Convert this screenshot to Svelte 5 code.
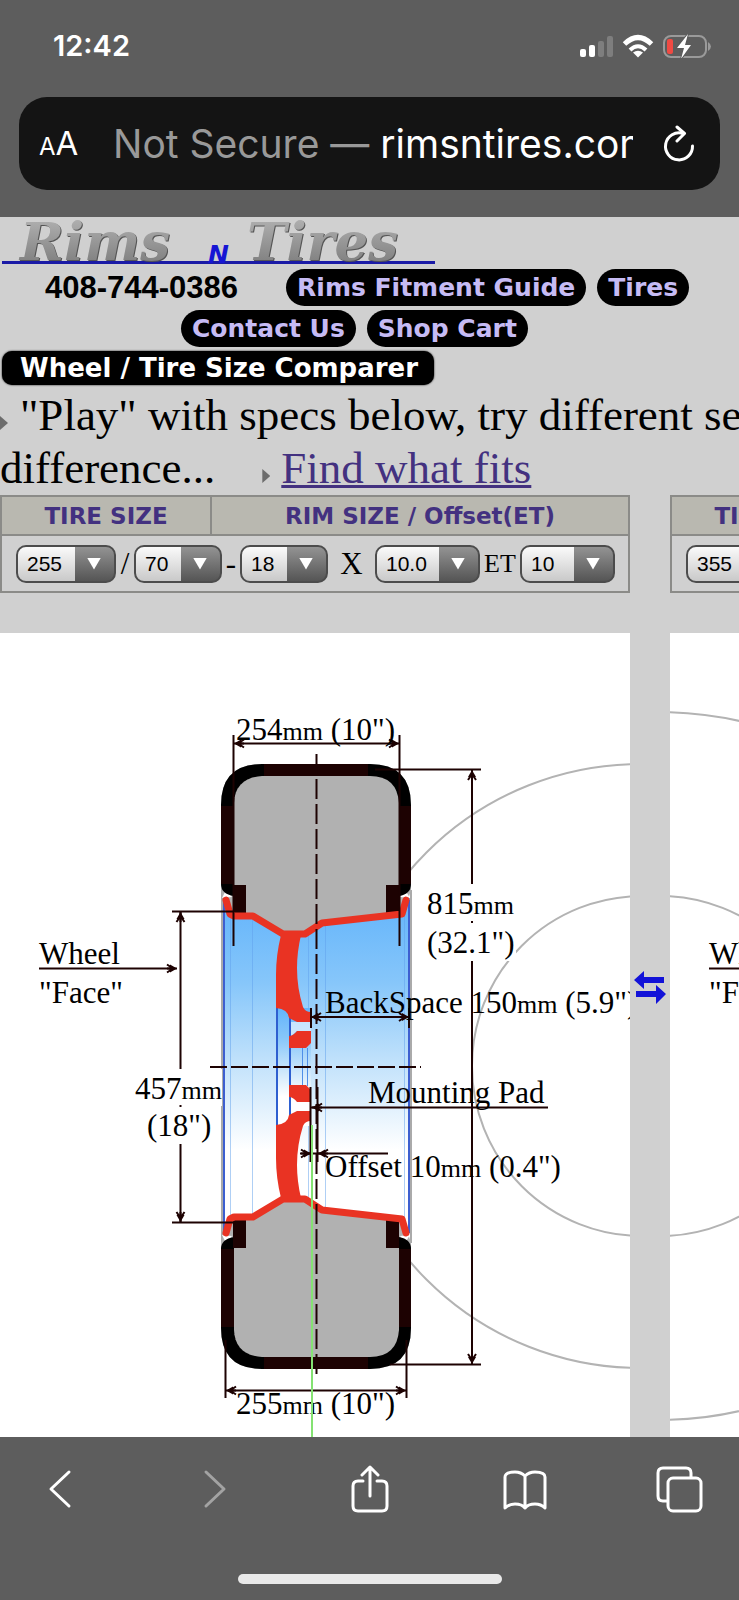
<script lang="ts">
    type Spec = { id: string; value: string; options: string[]; before: string };

    const specs: Spec[] = [
        { id: 'width', value: '255', options: ['245', '255', '265', '355'], before: '' },
        { id: 'aspect', value: '70', options: ['65', '70', '75'], before: '/' },
        { id: 'rim', value: '18', options: ['17', '18', '19'], before: '-' },
        { id: 'rim-width', value: '10.0', options: ['10.0', '10.5'], before: 'X' },
        { id: 'offset', value: '10', options: ['-10', '0', '10'], before: 'ET' }
    ];

    const labels: Record<string, string> = {
        width: 'Tire width',
        aspect: 'Aspect ratio',
        rim: 'Rim diameter',
        'rim-width': 'Rim width',
        offset: 'Offset'
    };

    // Each setup keeps its own values, the second one starts wider
    let setups = $state([
        specs.map((s) => s.value),
        specs.map((s) => (s.id === 'width' ? '355' : s.value))
    ]);

    function swapSetups() {
        setups = [setups[1], setups[0]];
    }
</script>

{#snippet sizeTable(n: number)}
    <table class="sizes">
        <thead>
            <tr>
                <th class="tire-col">TIRE SIZE</th>
                <th>RIM SIZE / Offset(ET)</th>
            </tr>
        </thead>
        <tbody>
            <tr>
                <td colspan="2">
                    <div class="specs">
                        {#each specs as spec, i}
                            {#if spec.before}
                                <span class="sep sep-{spec.id}">{spec.before}</span>
                            {/if}
                            <span class="picker">
                                <select id="{spec.id}-{n}" aria-label={labels[spec.id]} bind:value={setups[n][i]}>
                                    {#each spec.options as option}
                                        <option value={option}>{option}</option>
                                    {/each}
                                </select>
                            </span>
                        {/each}
                    </div>
                </td>
            </tr>
        </tbody>
    </table>
{/snippet}

{#snippet wheelFace()}
    <text x="39" y="964">Wheel</text>
    <text x="39" y="1003">"Face"</text>
    <path class="line" d="M39 968.5H170" />
    <use href="#head" transform="translate(177 968.5)" />
{/snippet}

<!-- upper half of the section, mirrored for the lower half -->
{#snippet half()}
    <path d="M221 890V805Q221 764 262 764H370Q411 764 411 805V890L405 910L402 916L323 924L305 936H283L253 918H233L226 905Z" fill="#b1b1b1" />
    <path d="M222 898L226 890L232 897M410 898L405 890L400 897" fill="#fff" />
    <path d="M221 805Q221 764 262 764H370Q411 764 411 805V884Q411 894 399 896V803Q397 776 370 776H262Q235 778 234 803V896Q221 894 221 884Z
        M234 803V885H399V803Q397 776 370 776H262Q235 778 234 803Z" fill="#000" fill-rule="evenodd" />
    <path d="M234 803V897H399V803Q397 776 370 776H262Q235 778 234 803Z" fill="#b1b1b1" />
    <path d="M221 806H234V884H221ZM399 806H411V884H399ZM264 764H368V776H264ZM233 885H246V914H233ZM386 885H399V914H386Z" fill="#1d0202" />
    <path d="M226 900L230 914L234 916H253L283 934H305L322 923L402 914L406 900" fill="none" stroke="#e93323" stroke-width="7" stroke-linecap="round" stroke-linejoin="round" />
    <path d="M281 935H301Q297 952 297 968Q297 988 303 1007Q305 1012 311 1012V1022H297L289 1018Q288 1009 276 1008V975Q276 955 281 935Z" fill="#e93323" />
    <path d="M289 1036Q293 1036 297 1031H311V1043L306 1048H289Z" fill="#e93323" />
{/snippet}

<div class="phone">
    <header class="chrome">
        <div class="status">
            <span class="time">12:42</span>
            <svg width="134" height="24" viewBox="579 33 134 24" aria-hidden="true">
                <rect x="580" y="48" width="6" height="8" rx="2" fill="#fff" />
                <rect x="589" y="44" width="6" height="12" rx="2" fill="#fff" />
                <rect x="598" y="40" width="6" height="16" rx="2" fill="#7e7e7e" />
                <rect x="607" y="35" width="6" height="21" rx="2" fill="#7e7e7e" />
                <g fill="none" stroke="#fff" stroke-width="5">
                    <path d="M624.5 43Q638 30 651.500 43" />
                    <path d="M630 49Q638 41.500 646 49" stroke-width="4" />
                </g>
                <path d="M633 51.500Q638 48 643 51.500L638 56.500Z" fill="#fff" />
                <rect x="664" y="35" width="42" height="21" rx="7" fill="none" stroke="#9a9a9a" stroke-width="2" />
                <path d="M708 41Q711 43 711 45.500Q711 48 708 50Z" fill="#9a9a9a" />
                <rect x="667" y="38" width="6" height="15" rx="2" fill="#f04a43" />
                <path d="M688 33L677 47H684L681 58L691 44H685Z" fill="#fff" stroke="#5c5c5c" stroke-width="2" paint-order="stroke" />
            </svg>
        </div>
        <div class="address">
            <button class="text-size" aria-label="Text size"><small>A</small>A</button>
            <div class="url"><span>Not Secure —</span> rimsntires.com</div>
            <button class="reload" aria-label="Reload">
                <svg width="32" height="38" viewBox="0 0 32 38" fill="none" stroke="#fff" stroke-width="3" stroke-linecap="round" stroke-linejoin="round">
                    <path d="M20 8.500A13.500 13.500 0 1 0 29.500 21" />
                    <path d="M14 2L21.500 8.500L14 16" />
                </svg>
            </button>
        </div>
    </header>

    <main>
        <div class="brand">
            <svg width="440" height="47" viewBox="0 0 440 47" role="img" aria-label="Rims N Tires">
                <defs>
                    <linearGradient id="metal" x1="0" y1="0" x2="0" y2="1">
                        <stop offset="0" stop-color="#b9b9b9" />
                        <stop offset="1" stop-color="#777" />
                    </linearGradient>
                </defs>
                <path d="M2 45.500H435" stroke="#1a1aa6" stroke-width="3" />
                <text class="logo shade" x="21" y="44">Rims</text>
                <text class="logo" x="20" y="43">Rims</text>
                <text class="logo shade" x="248" y="44">Tires</text>
                <text class="logo" x="247" y="43">Tires</text>
                <text class="logo-n" x="208" y="46">N</text>
            </svg>
        </div>

        <nav>
            <div class="nav-row first">
                <strong class="tel">408-744-0386</strong>
                <a class="pill" href="#guide">Rims Fitment Guide</a>
                <a class="pill" href="#tires">Tires</a>
            </div>
            <div class="nav-row second">
                <a class="pill" href="#contact">Contact Us</a>
                <a class="pill" href="#cart">Shop Cart</a>
            </div>
        </nav>

        <h1>Wheel / Tire Size Comparer</h1>

        <p class="intro">
            <i class="tri"></i><span class="play">"Play" with specs below, try different setups to see the</span><br />
            difference...<i class="tri inner"></i><a href="#fits">Find what fits</a>
        </p>

        <div class="pair tables">
            {@render sizeTable(0)}
            {@render sizeTable(1)}
        </div>

        <div class="pair drawings">
            <svg class="drawing" viewBox="0 633 630 804" width="630" height="804">
                <defs>
                    <linearGradient id="rimBlue" x1="0" y1="0" x2="0" y2="1">
                        <stop offset="0" stop-color="#63b4fb" />
                        <stop offset="0.25" stop-color="#86c6fa" />
                        <stop offset="0.5" stop-color="#c4e3fb" />
                        <stop offset="0.75" stop-color="#fff" />
                    </linearGradient>
                    <g id="head">
                        <path d="M0 0L-7 -4V4Z" fill="#1d0202" />
                        <path d="M-4 0L-10 -4M-4 0L-10 4M-10 0H0" fill="none" stroke="#1d0202" stroke-width="2" />
                    </g>
                </defs>

                <g fill="none" stroke="#b3b3b3" stroke-width="2">
                    <circle cx="640" cy="1066" r="302" />
                    <circle cx="642" cy="1066" r="170" />
                </g>
                <rect x="425" y="884" width="91" height="77" fill="#fff" />

                <rect x="221" y="898" width="190" height="336" fill="url(#rimBlue)" />
                <g stroke="#5f9fec" stroke-opacity="0.5" fill="none" stroke-width="1">
                    <path d="M230.500 915V1220M252.500 915V1220M308.500 935V1200M325.500 925V1210M404.500 912V1220" />
                </g>
                <rect x="277" y="1008" width="34" height="118" fill="url(#rimBlue)" />
                <path d="M291 1022H311V1031H297L291 1036ZM291 1102H297L311 1111H291Z" fill="#fff" fill-opacity="0.6" />
                <path d="M277 1008V1126M290 1018V1116" stroke="#2e5fd0" stroke-width="2" />
                <path d="M302.500 1048V1086M307.500 1048V1086" stroke="#4f8fe8" />
                <path d="M222 890V1243M411 890V1243" stroke="#aaa" stroke-width="2" />
                <path d="M224 900V1233M409 900V1233" stroke="#3d5fd0" stroke-width="2" />

                {@render half()}
                <g transform="translate(0 2133) scale(1 -1)">{@render half()}</g>

                <rect x="134" y="1069" width="88" height="37" fill="#fff" />

                <g class="line">
                    <path d="M233.500 735V946M399.500 735V946M236 743.500H397" />
                    <path d="M172 911.500H233M172 1222.500H236M180.500 912V1069M180.500 1144V1222M180.500 1105V1107" />
                    <path d="M375 769.500H481M390 1364.500H481M472 770V884M472 961V1364M472 921V923" />
                    <path d="M311 1008V1028M409 1008V1028M313 1017H407" />
                    <path d="M311 1107.500H548M310.500 1087V1162M317.500 1087V1162M300 1153.500H388" />
                    <path d="M225.500 1340V1398M406.500 1340V1398M228 1390.500H404" />
                    <path d="M316.500 754V1378" stroke-dasharray="20 5" />
                    <path d="M210 1067H421" stroke-dasharray="17 4" />
                </g>
                <use href="#head" transform="translate(234 743.5) rotate(180)" />
                <use href="#head" transform="translate(399 743.5)" />
                <use href="#head" transform="translate(180.5 912) rotate(-90)" />
                <use href="#head" transform="translate(180.5 1222) rotate(90)" />
                <use href="#head" transform="translate(472 770) rotate(-90)" />
                <use href="#head" transform="translate(472 1364) rotate(90)" />
                <use href="#head" transform="translate(311 1017) rotate(180)" />
                <use href="#head" transform="translate(409 1017)" />
                <use href="#head" transform="translate(312 1107.5) rotate(180)" />
                <use href="#head" transform="translate(311 1153.5)" />
                <use href="#head" transform="translate(318 1153.5) rotate(180)" />
                <use href="#head" transform="translate(226 1390.5) rotate(180)" />
                <use href="#head" transform="translate(406 1390.5)" />

                {@render wheelFace()}
                <text x="236" y="740">254<tspan class="mm">mm</tspan> (10")</text>
                <text x="236" y="1414">255<tspan class="mm">mm</tspan> (10")</text>
                <text x="427" y="914">815<tspan class="mm">mm</tspan></text>
                <text x="427" y="953">(32.1")</text>
                <text x="135" y="1099">457<tspan class="mm">mm</tspan></text>
                <text x="147" y="1136">(18")</text>
                <text x="325" y="1013">BackSpace 150<tspan class="mm">mm</tspan> (5.9")</text>
                <text x="368" y="1103">Mounting Pad</text>
                <text x="325" y="1177">Offset 10<tspan class="mm">mm</tspan> (0.4")</text>

                <path d="M312 1125V1437" stroke="#84e272" stroke-width="2" />
            </svg>

            <div class="between">
                <button class="swap" aria-label="Swap setups" onclick={swapSetups}>
                    <svg width="32" height="33" viewBox="0 0 32 33" fill="#1212d8">
                        <path d="M0 9L10 0V6H30V12H10V18Z" />
                        <path d="M32 23L22 14V20H2V26H22V33Z" />
                    </svg>
                </button>
            </div>

            <svg class="drawing" viewBox="0 633 630 804" width="630" height="804">
                <g fill="none" stroke="#b3b3b3" stroke-width="2">
                    <circle cx="-10" cy="1066" r="354" />
                    <circle cx="-10" cy="1066" r="170" />
                </g>
                {@render wheelFace()}
            </svg>
        </div>
    </main>

    <footer class="chrome">
        <div class="toolbar">
            <button aria-label="Back">
                <svg width="50" height="50" viewBox="0 0 50 50"><path d="M34 7L16 24L34 41" /></svg>
            </button>
            <button aria-label="Forward" class="dim">
                <svg width="50" height="50" viewBox="0 0 50 50"><path d="M16 7L34 24L16 41" /></svg>
            </button>
            <button aria-label="Share">
                <svg width="50" height="50" viewBox="0 0 50 50">
                    <path d="M18 16H13Q8 16 8 21V41Q8 46 13 46H37Q42 46 42 41V21Q42 16 37 16H32" />
                    <path d="M25 31V2M17 10L25 2L33 10" />
                </svg>
            </button>
            <button aria-label="Bookmarks">
                <svg width="50" height="50" viewBox="0 0 50 50">
                    <path d="M25 11Q21 7 15 7Q5 7 5 12V43Q9 39 15 39Q22 39 25 43Q28 39 35 39Q41 39 45 43V12Q45 7 35 7Q29 7 25 11V43" />
                </svg>
            </button>
            <button aria-label="Tabs">
                <svg width="50" height="50" viewBox="0 0 50 50">
                    <path d="M36 12V8Q36 3 31 3H8Q3 3 3 8V31Q3 36 8 36H12" />
                    <rect x="13" y="13" width="33" height="33" rx="5" />
                </svg>
            </button>
        </div>
        <div class="home"></div>
    </footer>
</div>

<style>
    :global(body) {
        margin: 0;
        background: #5c5c5c;
    }

    .phone {
        display: flex;
        flex-direction: column;
        overflow: hidden;
        font-family: Inter, Roboto, sans-serif;
    }

    button {
        padding: 0;
        border: 0;
        background: none;
        color: #fff;
        font: inherit;
        cursor: pointer;
    }

    svg {
        display: block;
    }

    .chrome {
        background: #5d5d5d;
        color: #fff;
    }

    /* status bar and address field */
    .status {
        display: flex;
        justify-content: space-between;
        align-items: center;
        height: 91px;
        padding: 0 26px 0 53px;
    }

    .time {
        font-size: 29px;
        font-weight: 600;
    }

    .address {
        display: flex;
        align-items: center;
        height: 93px;
        margin: 6px 19px 27px;
        padding: 0 25px 0 20px;
        border-radius: 28px;
        background: #141414;
    }

    .text-size {
        flex: none;
        width: 74px;
        padding-top: 3px;
        text-align: left;
        font-size: 33px;
        line-height: 40px;
    }

    .text-size small {
        font-size: 24px;
    }

    .url {
        flex: 1;
        overflow: hidden;
        white-space: nowrap;
        font-size: 39px;
        line-height: 60px;
    }

    .url span {
        color: #999;
    }

    .reload {
        margin-left: 30px;
    }

    /* web page */
    main {
        overflow: hidden;
        background: #d0d0d0;
        color: #000;
        font-family: "Liberation Serif", serif;
    }

    .brand {
        height: 48px;
    }

    .brand svg {
        overflow: visible;
    }

    .logo {
        font-family: "DejaVu Serif", serif;
        font-size: 53px;
        font-style: italic;
        font-weight: bold;
        fill: url(#metal);
    }

    .logo.shade {
        fill: #555;
    }

    .logo-n {
        font-family: "DejaVu Sans", sans-serif;
        font-size: 25px;
        font-style: italic;
        font-weight: bold;
        fill: #1616d4;
    }

    .nav-row {
        display: flex;
        gap: 11px;
        padding-top: 4px;
    }

    .first {
        padding-left: 45px;
    }

    .second {
        padding-left: 181px;
    }

    .tel {
        margin-right: 37px;
        font-family: "Liberation Sans", sans-serif;
        font-size: 31px;
        line-height: 37px;
    }

    .pill,
    h1 {
        border-radius: 19px;
        background: #000;
        font-family: "DejaVu Sans", sans-serif;
        font-weight: bold;
        white-space: nowrap;
    }

    .pill {
        padding: 0 11px;
        color: #c6bbf4;
        font-size: 25px;
        line-height: 37px;
        text-decoration: none;
    }

    h1 {
        width: max-content;
        margin: 4px 2px;
        padding: 0 16px 0 18px;
        border-radius: 10px;
        box-shadow: 0 0 2px #000;
        color: #fff;
        font-size: 26px;
        line-height: 34px;
    }

    .intro {
        margin: 0;
        font-size: 45px;
        line-height: 53px;
        white-space: nowrap;
    }

    .intro a {
        color: #433180;
        text-decoration-thickness: 3px;
    }

    .tri {
        display: inline-block;
        width: 8px;
        height: 14px;
        background: #6c6c6c;
        clip-path: polygon(0 0, 100% 50%, 0 100%);
    }

    .play {
        margin-left: 12px;
    }

    .inner {
        margin: 0 11px 0 47px;
    }

    .pair {
        display: flex;
        width: max-content;
    }

    .tables {
        gap: 40px;
        padding-bottom: 40px;
    }

    .sizes {
        width: 630px;
        border-collapse: collapse;
    }

    th,
    td {
        padding: 0;
        border: 2px solid #8b8b88;
    }

    th {
        height: 37px;
        background: #b9b8b0;
        color: #433180;
        font-family: "DejaVu Sans", sans-serif;
        font-size: 23px;
        line-height: 26px;
    }

    .tire-col {
        width: 208px;
    }

    .specs {
        display: flex;
        align-items: center;
        height: 55px;
        padding-left: 14px;
        font-size: 31px;
    }

    .sep {
        width: 18px;
        line-height: 38px;
        text-align: center;
    }

    .sep-rim-width {
        width: 47px;
    }

    .sep-offset {
        width: 40px;
        font-size: 26px;
    }

    .picker {
        position: relative;
    }

    .picker::after {
        content: "";
        position: absolute;
        top: 13px;
        right: 15px;
        width: 14px;
        height: 12px;
        background: #fff;
        clip-path: polygon(0 0, 100% 0, 50% 100%);
        pointer-events: none;
    }

    select {
        display: block;
        height: 38px;
        padding: 0 51px 0 9px;
        appearance: none;
        border: 2px solid #4c4c4c;
        border-radius: 10px;
        background:
            linear-gradient(#939393, #555) right / 39px 100% no-repeat,
            linear-gradient(#fafafa, #c9c9c9);
        color: #000;
        font-family: "Liberation Sans", sans-serif;
        font-size: 21px;
    }

    .drawing {
        flex: none;
        background: #fff;
        font-size: 31px;
    }

    .mm {
        font-size: 26px;
    }

    .line {
        fill: none;
        stroke: #1d0202;
        stroke-width: 2;
    }

    .between {
        width: 40px;
        padding-top: 338px;
        box-sizing: border-box;
    }

    .swap {
        display: block;
        margin: 0 auto;
    }

    /* browser toolbar */
    .toolbar {
        display: flex;
        justify-content: space-between;
        padding: 28px 34px 59px 35px;
    }

    .toolbar svg {
        fill: none;
        stroke: #fff;
        stroke-width: 3;
        stroke-linecap: round;
        stroke-linejoin: round;
    }

    .toolbar .dim svg {
        stroke: #a3a3a3;
    }

    footer {
        padding-bottom: 16px;
    }

    .home {
        width: 264px;
        height: 10px;
        margin: 0 auto;
        border-radius: 5px;
        background: #e9e9e9;
    }
</style>
